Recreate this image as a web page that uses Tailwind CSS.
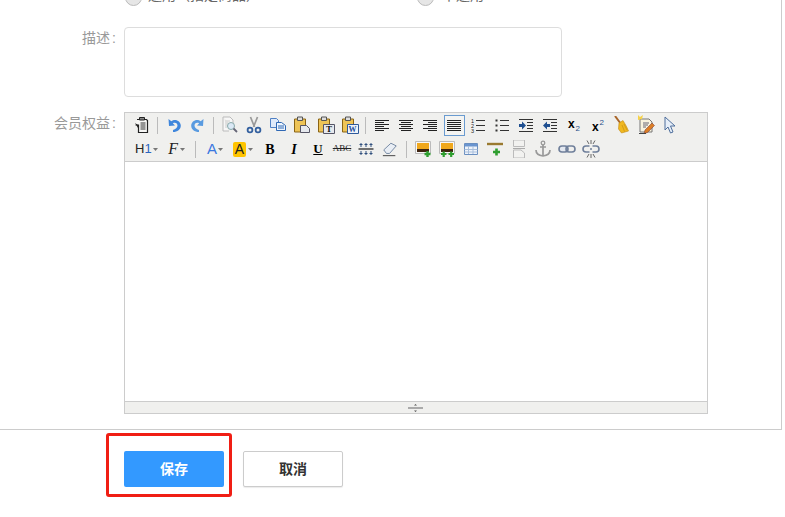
<!DOCTYPE html>
<html lang="zh">
<head>
    <meta charset="UTF-8" />
    <meta name="viewport" content="width=device-width, initial-scale=1" />
    <title>会员权益</title>
    <script src="https://cdn.jsdelivr.net/npm/@tailwindcss/browser@4"></script>
</head>
<body class="relative h-[517px] w-[785px] overflow-hidden bg-white font-['Liberation_Sans','Noto_Sans_CJK_SC',sans-serif] text-[14px]">
    <!-- form panel -->
    <div class="h-[430px] w-[782px] border-r border-b border-[#ccc] overflow-hidden">
        <!-- radios, scrolled mostly out of view -->
        <div class="-mt-[11px] mb-[22px] flex h-4 pl-[125px] text-[#666]">
            <div class="flex w-[292px] gap-[6px]">
                <span class="h-[17px] w-[17px] shrink-0 rounded-full border border-[#bbb] bg-[#e6e6e6]"></span>
                <span class="-mt-[4px] leading-5">通用（指定商品）</span>
            </div>
            <div class="flex gap-[8px]">
                <span class="h-[17px] w-[17px] shrink-0 rounded-full border border-[#bbb] bg-[#e6e6e6]"></span>
                <span class="-mt-[4px] leading-5">不通用</span>
            </div>
        </div>

        <!-- description -->
        <div class="mb-[15px] flex">
            <label class="w-[116px] pt-[1px] text-right leading-[20px] text-[#999]">描述<span class="pl-[2px]">:</span></label>
            <textarea class="ml-[8px] h-[70px] w-[438px] resize-none rounded-[4px] border border-[#ddd] bg-white"></textarea>
        </div>

        <!-- rich text editor -->
        <div class="flex">
            <label class="w-[116px] text-right leading-[22px] text-[#999]">会员权益<span class="pl-[2px]">:</span></label>
            <div class="ml-[8px] flex h-[302px] w-[584px] flex-col border border-[#ccc]">
                <div class="h-[49px] border-b border-[#ccc] bg-[#f0f0ee] pl-[5px]">
                    <!-- toolbar row 1 -->
                    <div class="flex h-6 items-center">
                        <span class="flex h-6 w-6 items-center justify-center"><svg class="h-[18px] w-[18px]" viewBox="0 0 18 18"><path d="M4 3.500h9.500l1 1v12h-9V9H2.500" fill="#f6f6f4" stroke="#222" stroke-width="1.200"/><path d="M6.500 1.500h5V4h-5z" fill="#888" stroke="#222"/><path d="M7.500 7h5M7.500 9h5M7.500 11h5M7.500 13h5" stroke="#333"/><path d="M2 7l3 2v3z" fill="#222"/></svg></span>
                        <span class="ml-[3px] mr-[4px] h-[17px] w-px bg-[#bbb]"></span>
                        <span class="flex h-6 w-6 items-center justify-center"><svg class="h-4 w-4" viewBox="0 0 16 16"><path d="M2.500 2l.5 7 6-.5-2.200-2.200C9.500 5 11.500 6.500 11.500 8.500S9.500 12 7 13v2c4.500 0 7.800-2.500 7.800-6.500C14.800 4 9 1 5.300 4.300z" fill="#3f86dc"/></svg></span>
                        <span class="flex h-6 w-6 items-center justify-center"><svg class="h-4 w-4" viewBox="0 0 16 16"><path d="M13.500 2l-.5 7-6-.5 2.200-2.200C6.500 5 4.500 6.500 4.500 8.500S6.500 12 9 13v2c-4.500 0-7.800-2.500-7.800-6.500C1.200 4 7 1 10.700 4.300z" fill="#5a9be0"/></svg></span>
                        <span class="ml-[3px] mr-[4px] h-[17px] w-px bg-[#bbb]"></span>
                        <span class="flex h-6 w-6 items-center justify-center"><svg class="h-[18px] w-[18px]" viewBox="0 0 18 18"><path d="M2 1h7l3 3v6M2 1v14h6" fill="#f7f7f7" stroke="#bbb"/><path d="M4 5h5M4 7h3M4 9h3M4 11h2" stroke="#ccc"/><circle cx="10" cy="10" r="3.500" fill="#dbe9f6" stroke="#8aa"/><path d="M12.500 12.500L16 16" stroke="#667" stroke-width="1.800"/></svg></span>
                        <span class="flex h-6 w-6 items-center justify-center"><svg class="h-[18px] w-[18px]" viewBox="0 0 18 18"><path d="M5.500 1l4 10M12.500 1l-4 10" stroke="#999" stroke-width="1.700"/><circle cx="5" cy="14" r="2.400" fill="none" stroke="#33609f" stroke-width="1.800"/><circle cx="13" cy="14" r="2.400" fill="none" stroke="#33609f" stroke-width="1.800"/></svg></span>
                        <span class="flex h-6 w-6 items-center justify-center"><svg class="h-[18px] w-[18px]" viewBox="0 0 18 18"><path d="M1.500 2.500h6l2 2v7h-8z" fill="#dfeafa" stroke="#4f80c4"/><path d="M7.500 6.500h5l4 3v5h-9z" fill="#eef5fe" stroke="#2f68b4"/><path d="M9 10h6M9 12h6" stroke="#2f68b4"/></svg></span>
                        <span class="flex h-6 w-6 items-center justify-center"><svg class="h-[18px] w-[18px]" viewBox="0 0 18 18"><path d="M1.500 3h11v13h-11z" fill="#eec457" stroke="#8a6414"/><path d="M4.500 1h5v3.500h-5z" fill="#ddd" stroke="#555"/><path d="M7.500 9.500h6l3 3v4h-9z" fill="#e6e9ee" stroke="#556"/></svg></span>
                        <span class="flex h-6 w-6 items-center justify-center"><svg class="h-[18px] w-[18px]" viewBox="0 0 18 18"><path d="M1.500 3h11v13h-11z" fill="#eec457" stroke="#8a6414"/><path d="M4.500 1h5v3.500h-5z" fill="#ddd" stroke="#555"/><path d="M6.500 8.500h11v9h-11z" fill="#e6e9ee" stroke="#556"/><text x="9" y="16" font-family="Liberation Serif" font-size="9" font-weight="700" fill="#111">T</text></svg></span>
                        <span class="flex h-6 w-6 items-center justify-center"><svg class="h-[18px] w-[18px]" viewBox="0 0 18 18"><path d="M1.500 3h11v13h-11z" fill="#eec457" stroke="#8a6414"/><path d="M4.500 1h5v3.500h-5z" fill="#ddd" stroke="#555"/><path d="M6.500 8.500h11v9h-11z" fill="#eef3fa" stroke="#2f5a9c"/><text x="7.500" y="16" font-family="Liberation Serif" font-size="8" font-weight="700" fill="#1f4f9c">W</text></svg></span>
                        <span class="ml-[3px] mr-[4px] h-[17px] w-px bg-[#bbb]"></span>
                        <span class="flex h-6 w-6 items-center justify-center"><svg class="h-4 w-4" viewBox="0 0 16 16"><path d="M1 3.500h14M1 5.500h9M1 7.500h14M1 9.500h9M1 11.500h14M1 13.500h9" stroke="#222"/></svg></span>
                        <span class="flex h-6 w-6 items-center justify-center"><svg class="h-4 w-4" viewBox="0 0 16 16"><path d="M1 3.500h14M3 5.500h10M1 7.500h14M3 9.500h10M1 11.500h14M3 13.500h10" stroke="#222"/></svg></span>
                        <span class="flex h-6 w-6 items-center justify-center"><svg class="h-4 w-4" viewBox="0 0 16 16"><path d="M1 3.500h14M6 5.500h9M1 7.500h14M6 9.500h9M1 11.500h14M6 13.500h9" stroke="#222"/></svg></span>
                        <span class="flex h-6 w-6 items-center justify-center"><span class="flex h-[21px] w-[21px] items-center justify-center border border-[#6a9bd0] bg-[#f4f4f2]"><svg class="h-4 w-4" viewBox="0 0 16 16"><path d="M1 3.500h14M1 5.500h14M1 7.500h14M1 9.500h14M1 11.500h14M1 13.500h14" stroke="#222"/></svg></span></span>
                        <span class="flex h-6 w-6 items-center justify-center"><svg class="h-4 w-4" viewBox="0 0 16 16"><path d="M6 3.500h9M6 8.500h9M6 13.500h9" stroke="#333"/><text x="1" y="5.500" font-family="Liberation Sans" font-size="5.500" fill="#222">1</text><text x="1" y="10.500" font-family="Liberation Sans" font-size="5.500" fill="#222">2</text><text x="1" y="15.500" font-family="Liberation Sans" font-size="5.500" fill="#222">3</text></svg></span>
                        <span class="flex h-6 w-6 items-center justify-center"><svg class="h-4 w-4" viewBox="0 0 16 16"><path d="M6 3.500h9M6 8.500h9M6 13.500h9" stroke="#333"/><path d="M1.500 2.500h2v2h-2zM1.500 7.500h2v2h-2zM1.500 12.500h2v2h-2z" fill="#333"/></svg></span>
                        <span class="flex h-6 w-6 items-center justify-center"><svg class="h-4 w-4" viewBox="0 0 16 16"><path d="M1 2.500h14M9 5.500h6M9 8.500h6M9 11.500h6M1 14.500h14" stroke="#333"/><path d="M1 7h3V4.500L8 8.500l-4 4V10H1z" fill="#1f4f90"/></svg></span>
                        <span class="flex h-6 w-6 items-center justify-center"><svg class="h-4 w-4" viewBox="0 0 16 16"><path d="M1 2.500h14M9 5.500h6M9 8.500h6M9 11.500h6M1 14.500h14" stroke="#333"/><path d="M8 7H5V4.500L1 8.500l4 4V10h3z" fill="#1f4f90"/></svg></span>
                        <span class="flex h-6 w-6 items-center justify-center text-[12px] font-bold leading-none text-black"><span class="-mt-[3px]">x</span><span class="ml-[1px] mt-[8px] text-[8px] font-normal text-[#2a4f8a]">2</span></span>
                        <span class="flex h-6 w-6 items-center justify-center text-[12px] font-bold leading-none text-black"><span class="mt-[3px]">x</span><span class="-mt-[5px] ml-[1px] text-[8px] font-normal text-[#2a4f8a]">2</span></span>
                        <span class="flex h-6 w-6 items-center justify-center"><svg class="h-[18px] w-[18px]" viewBox="0 0 18 18"><path d="M2 0l6 8" stroke="#a9662a" stroke-width="2"/><path d="M6 7l4-2.500 3.500 6 2 4.500-7 2-3-4z" fill="#f0b820" stroke="#c28a10" stroke-width=".6"/><path d="M9 9l2.500 6.500M11 8l3 6" stroke="#c78f12" stroke-width=".7"/></svg></span>
                        <span class="flex h-6 w-6 items-center justify-center"><svg class="h-5 w-5" viewBox="0 0 20 20"><path d="M4 4h9l3 3v10H4z" fill="#f7f2de" stroke="#777"/><path d="M2 0l2 2 3-2-1 4-4 1z" fill="#f6d24a"/><path d="M7 8h6M7 10h5M7 12h3" stroke="#667"/><path d="M9 15l7-7 2.500 2.500-7 7-3.500 1z" fill="#db7e25" stroke="#733" stroke-width=".5"/><path d="M3 18.500h7" stroke="#444"/></svg></span>
                        <span class="flex h-6 w-6 items-center justify-center"><svg class="h-[18px] w-[18px]" viewBox="0 0 18 18"><path d="M4 1v13l3-3 2.500 6 2.500-1-2.500-6H14z" fill="#e6eef8" stroke="#4f6f9c"/></svg></span>
                    </div>
                    <!-- toolbar row 2 -->
                    <div class="flex h-6 items-center">
                        <span class="flex h-6 w-[27px] items-center pl-[5px] text-[13px] text-[#222]">H<span class="text-[#2a66c0]">1</span><svg class="ml-[1px] h-[3px] w-[5px] shrink-0" viewBox="0 0 5 3"><path d="M0 0h5L2.500 3z" fill="#777"/></svg></span>
                        <span class="flex h-6 w-[34px] items-center justify-end pr-[6px] font-['Liberation_Serif'] text-[16px] italic text-[#222]">F<svg class="ml-[2px] h-[3px] w-[5px]" viewBox="0 0 5 3"><path d="M0 0h5L2.500 3z" fill="#777"/></svg></span>
                        <span class="ml-[4px] mr-[11px] h-[17px] w-px bg-[#bbb]"></span>
                        <span class="flex h-6 w-[26px] items-center text-[15px] text-[#3a78e0]">A<svg class="ml-[1px] h-[3px] w-[5px]" viewBox="0 0 5 3"><path d="M0 0h5L2.500 3z" fill="#777"/></svg></span>
                        <span class="flex h-6 w-[25px] items-center text-[14px] text-[#222]"><span class="flex h-[15px] w-[13px] items-center justify-center rounded-[2px] bg-[#ffc400]">A</span><svg class="ml-[2px] h-[3px] w-[5px]" viewBox="0 0 5 3"><path d="M0 0h5L2.500 3z" fill="#777"/></svg></span>
                        <span class="flex h-6 w-6 items-center justify-center font-['Liberation_Serif'] text-[14px] font-bold text-black">B</span>
                        <span class="flex h-6 w-6 items-center justify-center font-['Liberation_Serif'] text-[14px] font-bold italic text-black">I</span>
                        <span class="flex h-6 w-6 items-center justify-center font-['Liberation_Serif'] text-[13px] font-bold text-black underline">U</span>
                        <span class="flex h-6 w-6 items-center justify-center font-['Liberation_Serif'] text-[9px] text-[#222] line-through">ABC</span>
                        <span class="flex h-6 w-6 items-center justify-center"><svg class="h-4 w-4" viewBox="0 0 16 16"><path d="M.5 8h15" stroke="#444" stroke-width="1.500"/><path d="M3 2v4M8 2v4M13 2v4M3 10v4M8 10v4M13 10v4M1.500 3.500h3M6.500 3.500h3M11.500 3.500h3M1.500 12.500h3M6.500 12.500h3M11.500 12.500h3" stroke="#31507e"/></svg></span>
                        <span class="flex h-6 w-6 items-center justify-center"><svg class="h-4 w-4" viewBox="0 0 18 18"><path d="M2 10l8-7.500 6 3-7.500 8.500H5z" fill="#e9eef5" stroke="#6a7f9c"/><path d="M1 16.500h14" stroke="#333"/></svg></span>
                        <span class="mx-[4px] h-[17px] w-px bg-[#bbb]"></span>
                        <span class="flex h-6 w-6 items-center justify-center"><svg class="h-[18px] w-[18px]" viewBox="0 0 18 18"><path d="M1.500 1.500h15v12h-15z" fill="#f8f8f8" stroke="#bbb"/><path d="M3 3h12v9H3z" fill="#f0a81e"/><path d="M3 9h12v3H3z" fill="#3e2410"/><path d="M10.500 14h6M13.500 11v6" stroke="#2f9e2f" stroke-width="2.400"/></svg></span>
                        <span class="flex h-6 w-6 items-center justify-center"><svg class="h-[18px] w-[18px]" viewBox="0 0 18 18"><path d="M1.500 1.500h15v12h-15z" fill="#f8f8f8" stroke="#bbb"/><path d="M3 3h12v9H3z" fill="#f0a81e"/><path d="M3 9h12v3H3z" fill="#3e2410"/><path d="M3 14h5.500M5.700 11.500v5.500M10.500 14h5.500M13.200 11.500v5.500" stroke="#2f9e2f" stroke-width="2.200"/></svg></span>
                        <span class="flex h-6 w-6 items-center justify-center"><svg class="h-4 w-4" viewBox="0 0 16 16"><path d="M1.500 2.500h13v11h-13z" fill="#eef3fa" stroke="#6a8fc0"/><path d="M2 3h12v2.500H2z" fill="#6a95d0"/><path d="M1.500 8.500h13M1.500 11h13M5.500 5v8M10 5v8" stroke="#a9bfdc"/></svg></span>
                        <span class="flex h-6 w-6 items-center justify-center"><svg class="h-[18px] w-[18px]" viewBox="0 0 18 18"><path d="M1 4h16" stroke="#9a7a30" stroke-width="2.400"/><path d="M7 12h7M10.500 8.500v7" stroke="#2f9e2f" stroke-width="2.600"/></svg></span>
                        <span class="flex h-6 w-6 items-center justify-center"><svg class="h-[18px] w-[18px]" viewBox="0 0 18 18"><path d="M3.500 0h11v6.500h-11zM3.500 10h7.500l3.500 3v5h-11z" fill="#f2f2f0" stroke="#bbb"/><path d="M3 8.500h12" stroke="#aaa"/></svg></span>
                        <span class="flex h-6 w-6 items-center justify-center"><svg class="h-[18px] w-[18px]" viewBox="0 0 18 18"><circle cx="9" cy="3" r="1.800" fill="none" stroke="#999" stroke-width="1.300"/><path d="M9 5v11M6 7h6M2 10c0 3.500 3 5.500 7 6 4-.5 7-2.500 7-6" fill="none" stroke="#999" stroke-width="1.700"/></svg></span>
                        <span class="flex h-6 w-6 items-center justify-center"><svg class="h-[18px] w-[18px]" viewBox="0 0 18 18"><rect x="1" y="6" width="9" height="6" rx="3" fill="#e3e8f0" stroke="#6f7f9a" stroke-width="1.600"/><rect x="8" y="6" width="9" height="6" rx="3" fill="none" stroke="#6f7f9a" stroke-width="1.600"/></svg></span>
                        <span class="flex h-6 w-6 items-center justify-center"><svg class="h-[18px] w-[18px]" viewBox="0 0 18 18"><path d="M7.500 6H4a3 3 0 000 6h3.500M10.500 6H14a3 3 0 010 6h-3.500M8 9h2" fill="none" stroke="#6f7f9a" stroke-width="1.600"/><path d="M5 .5l2 3.500M9 0v4M13 .5L11 4M5 17.500l2-3.500M9 18v-4M13 17.500L11 14" stroke="#444" stroke-width=".8"/></svg></span>
                    </div>
                </div>
                <div class="flex-1 bg-white"></div>
                <!-- resize bar -->
                <div class="flex h-[12px] items-center justify-center border-t border-[#ccc] bg-[#f0f0ee] pr-[1px]">
                    <svg class="h-[10px] w-[15px]" viewBox="0 0 15 10"><path d="M6 2.500h3L7.500 1zM6 7.500h3L7.500 9z" fill="#555"/><path d="M0 5h15" stroke="#aaa" stroke-width="2"/></svg>
                </div>
            </div>
        </div>
    </div>

    <!-- actions -->
    <div class="mt-[21px] flex pl-[124px]">
        <button class="h-9 w-[100px] rounded-[2px] bg-[#3399ff] text-[14px] font-bold text-white">保存</button>
        <button class="ml-[19px] h-9 w-[100px] rounded-[2px] border border-[#ccc] bg-white text-[14px] font-bold text-[#333] shadow-[0_1px_1px_rgba(0,0,0,0.08)]">取消</button>
    </div>

    <!-- red annotation over the save button -->
    <div class="absolute left-[106px] top-[433px] h-[64px] w-[126px] rounded-[3px] border-[3px] border-[#f01e14]"></div>
</body>
</html>
